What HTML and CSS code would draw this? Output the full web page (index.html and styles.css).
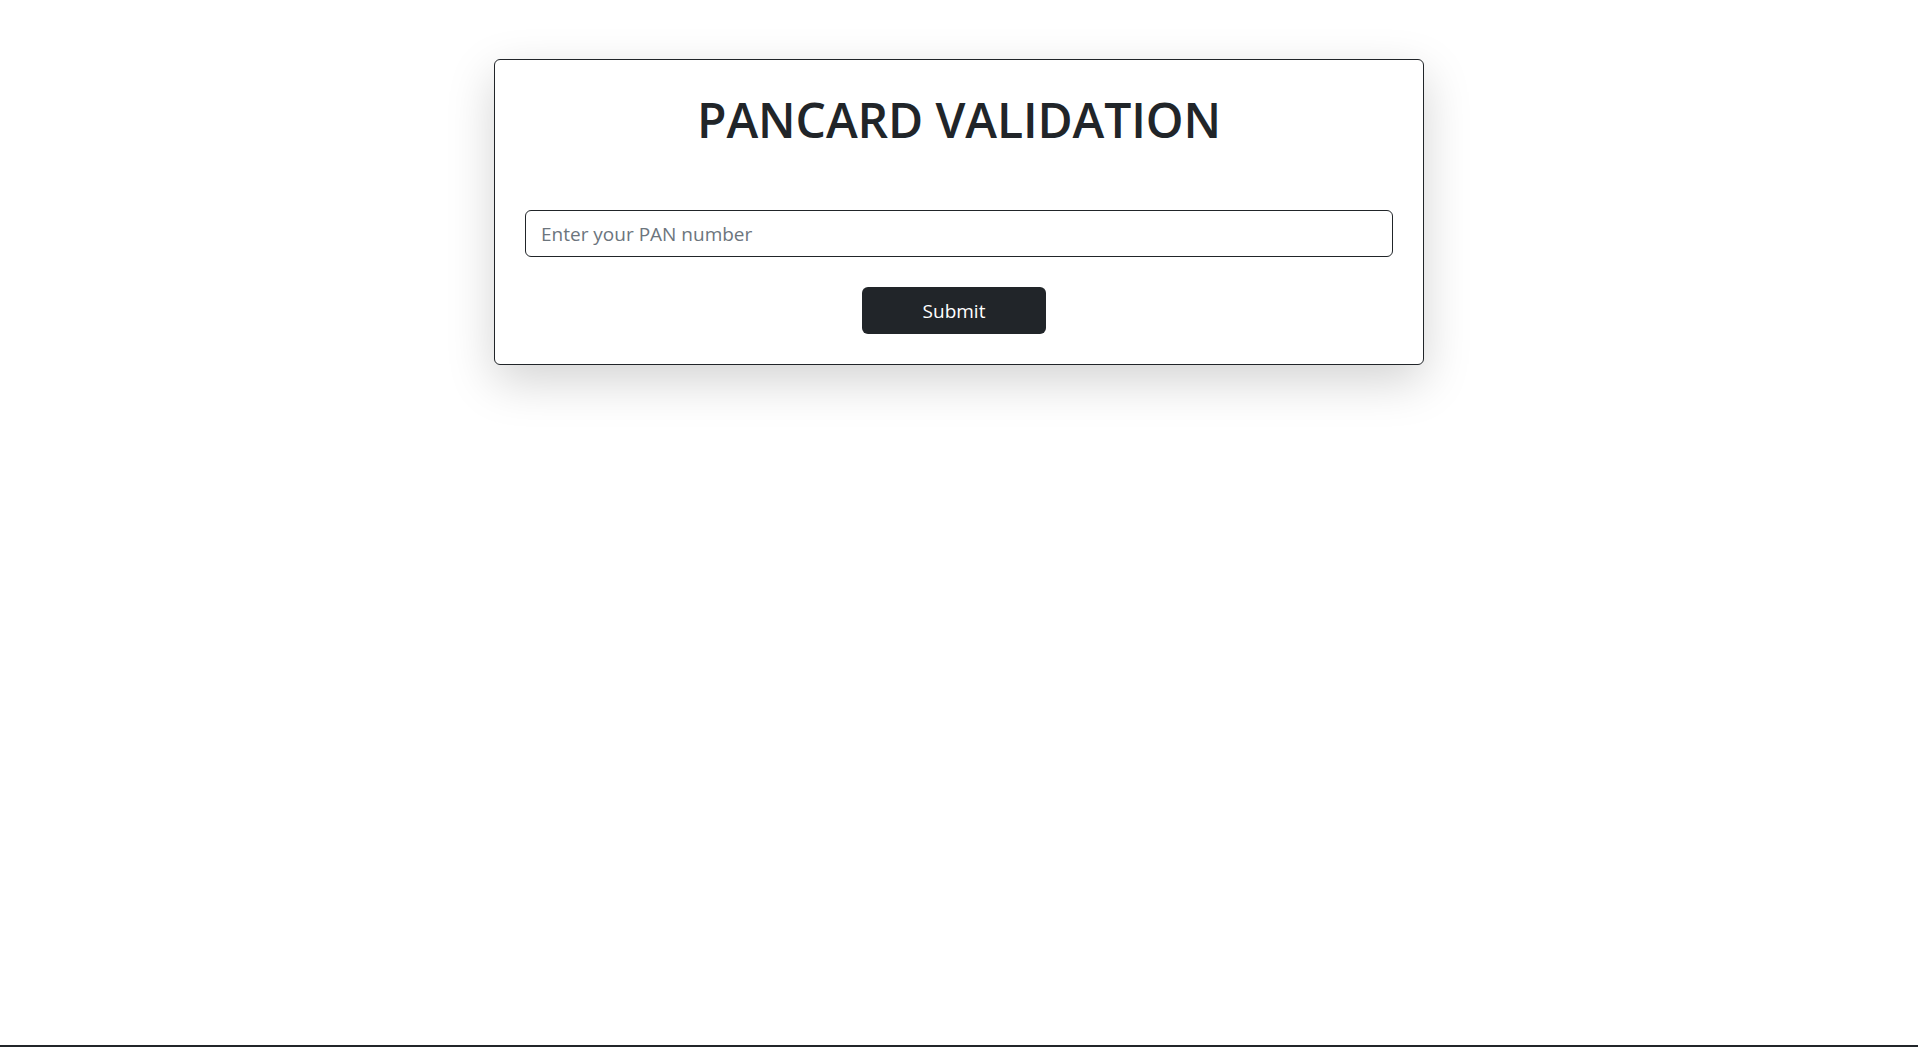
FILE: index.html
```html
<!DOCTYPE html>
<html lang="en">
<head>
<meta charset="utf-8">
<title>PANCARD VALIDATION</title>
<link rel="stylesheet" href="styles.css">
</head>
<body>
<main class="page">
  <form class="card" onsubmit="return false;">
    <h1 class="title">PANCARD VALIDATION</h1>
    <input class="pan-input" type="text" placeholder="Enter your PAN number">
    <div class="actions">
      <button class="submit" type="submit">Submit</button>
    </div>
  </form>
</main>
<div class="bottom-line"></div>
</body>
</html>
```

FILE: styles.css
```css
html, body {
  margin: 0;
  padding: 0;
}
body {
  min-height: 100vh;
  display: flex;
  flex-direction: column;
  background: #fff;
  font-family: "Open Sans", "Noto Sans", "Liberation Sans", sans-serif;
  color: #212529;
}
.page {
  flex: 1;
  display: flex;
  justify-content: center;
  align-items: flex-start;
  padding-top: 59px;
}
.card {
  width: 930px;
  box-sizing: border-box;
  border: 1px solid #212529;
  border-radius: 6px;
  background: #fff;
  padding: 30px;
  box-shadow: 0 16px 48px rgba(0, 0, 0, 0.175);
  display: flex;
  flex-direction: column;
}
.title {
  margin: 0 0 60px;
  text-align: center;
  font-size: 48px;
  line-height: 60px;
  font-weight: 600;
  letter-spacing: -0.1px;
  color: #212529;
}
.pan-input {
  display: block;
  box-sizing: border-box;
  width: 100%;
  height: 47px;
  border: 1px solid #212529;
  border-radius: 6px;
  padding: 0 15px;
  font-family: inherit;
  font-size: 19px;
  color: #212529;
  outline: none;
}
.pan-input::placeholder {
  color: #6c757d;
  opacity: 1;
}
.actions {
  display: flex;
  justify-content: center;
  margin-top: 30px;
}
.submit {
  width: 184px;
  height: 47px;
  margin-right: 10px;
  border: none;
  border-radius: 6px;
  background: #212529;
  color: #fff;
  font-family: inherit;
  font-size: 19px;
  cursor: pointer;
}
.bottom-line {
  height: 2px;
  background: #212529;
}
```
